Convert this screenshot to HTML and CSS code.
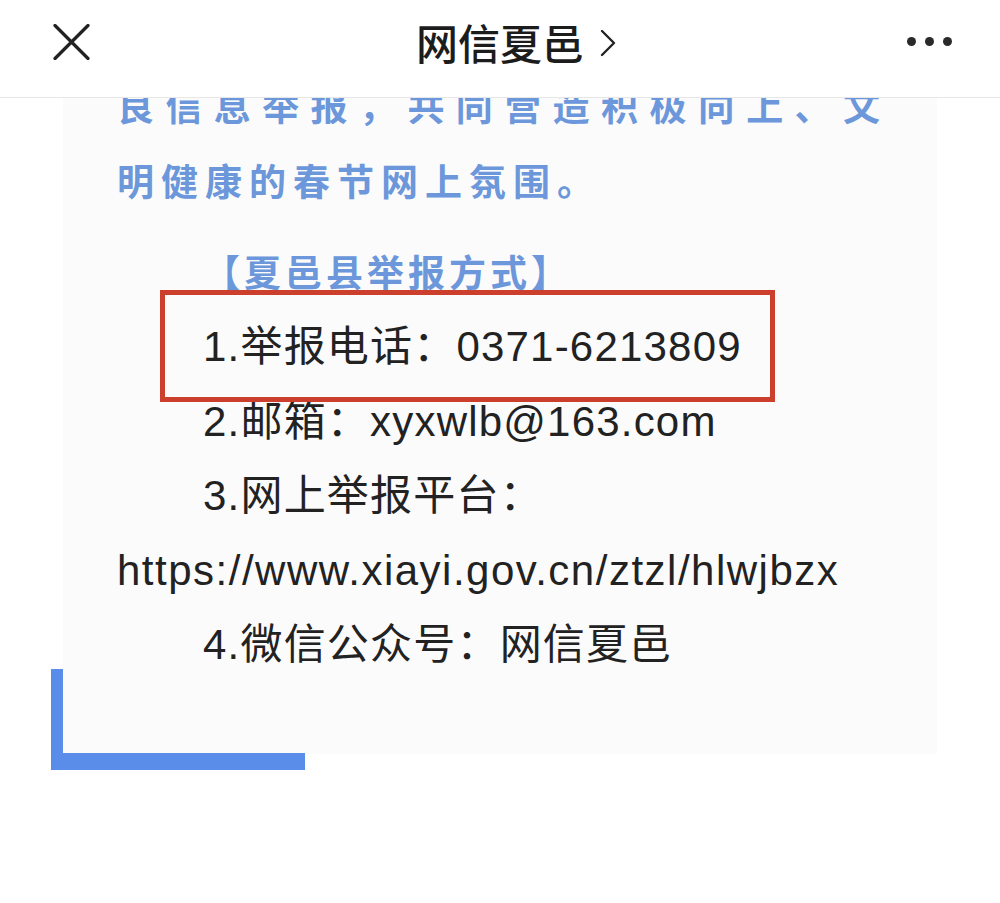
FILE: index.html
```html
<!DOCTYPE html>
<html lang="zh-CN">
<head>
<meta charset="utf-8">
<title>网信夏邑</title>
<link rel="stylesheet" href="styles.css">
</head>
<body>
<header class="nav">
  <svg class="close" width="37" height="36" viewBox="0 0 37 36" aria-hidden="true">
    <path d="M2 1.5 L35 34.5 M35 1.5 L2 34.5" stroke="#222" stroke-width="3.2" stroke-linecap="round" fill="none"/>
  </svg>
  <div class="title">网信夏邑<svg class="chev" width="18" height="30" viewBox="0 0 18 30" aria-hidden="true"><path d="M3 3 L15 15 L3 27" stroke="#222" stroke-width="2.4" fill="none" stroke-linecap="round" stroke-linejoin="round"/></svg></div>
  <div class="more"><span></span><span></span><span></span></div>
</header>
<main class="viewport">
  <article class="card">
    <p class="lead"><span class="line just">良信息举报，共同营造积极向上、文</span><span class="line">明健康的春节网上氛围。</span></p>
    <p class="heading">【夏邑县举报方式】</p>
    <p class="item marked">1.举报电话：0371-6213809</p>
    <p class="item">2.邮箱：xyxwlb@163.com</p>
    <p class="item">3.网上举报平台：</p>
    <p class="url">https://www.xiayi.gov.cn/ztzl/hlwjbzx</p>
    <p class="item">4.微信公众号：网信夏邑</p>
  </article>
  <div class="corner"></div>
</main>
</body>
</html>
```
FILE: styles.css
```css
*, *::before, *::after { box-sizing: border-box; }
html, body { margin: 0; padding: 0; background: #ffffff; }
body {
  width: 1000px;
  height: 903px;
  overflow: hidden;
  font-family: "Liberation Sans", "Noto Sans CJK SC", sans-serif;
  color: #222;
}
.nav {
  position: relative;
  z-index: 2;
  height: 98px;
  background: #fff;
  border-bottom: 1px solid #e7e7e7;
  display: flex;
  align-items: center;
  justify-content: space-between;
  padding: 0 48px 14px 53px;
}
.close { display: block; }
.title {
  position: absolute;
  left: 50%;
  top: 19px;
  transform: translateX(-50%);
  font-family: "Noto Sans CJK SC", sans-serif;
  font-size: 42px;
  font-weight: 500;
  line-height: 46px;
  color: #1c1c1c;
}
.chev {
  position: absolute;
  right: -33px;
  top: 9px;
}
.more { display: flex; gap: 9px; }
.more span {
  width: 9px;
  height: 9px;
  border-radius: 50%;
  background: #2a2a2a;
}
.viewport {
  position: relative;
  height: 805px;
  overflow: hidden;
}
.card {
  margin: -30px 0 0 63px;
  width: 874px;
  background: #fbfbfb;
  padding: 0 57px 71px 54px;
}
.card p { margin: 0; }
.lead {
  font-family: "Noto Sans CJK SC", sans-serif;
  font-weight: 700;
  font-size: 37px;
  line-height: 75px;
  color: #6c97da;
  letter-spacing: 7px;
}
.line { display: block; }
.just { text-align: justify; text-align-last: justify; letter-spacing: 0; }
.heading {
  margin-top: 15px !important;
  padding-left: 86px;
  font-family: "Noto Sans CJK SC", sans-serif;
  font-weight: 700;
  font-size: 37px;
  line-height: 77px;
  letter-spacing: 4px;
  color: #6c97da;
}
.item, .url {
  font-size: 42px;
  line-height: 74.5px;
  letter-spacing: 1.2px;
  color: #222;
  white-space: nowrap;
}
.url { letter-spacing: 1.5px; }
.item { padding-left: 86px; }
.marked { position: relative; }
.marked::after {
  content: "";
  position: absolute;
  left: 43px;
  width: 615px;
  top: -20px;
  bottom: -17px;
  border: 5px solid #cb3f2c;
}
.corner {
  position: absolute;
  left: 51px;
  top: 571px;
  width: 254px;
  height: 101px;
  border-left: 12px solid #5a8ce9;
  border-bottom: 17px solid #5a8ce9;
}
```
